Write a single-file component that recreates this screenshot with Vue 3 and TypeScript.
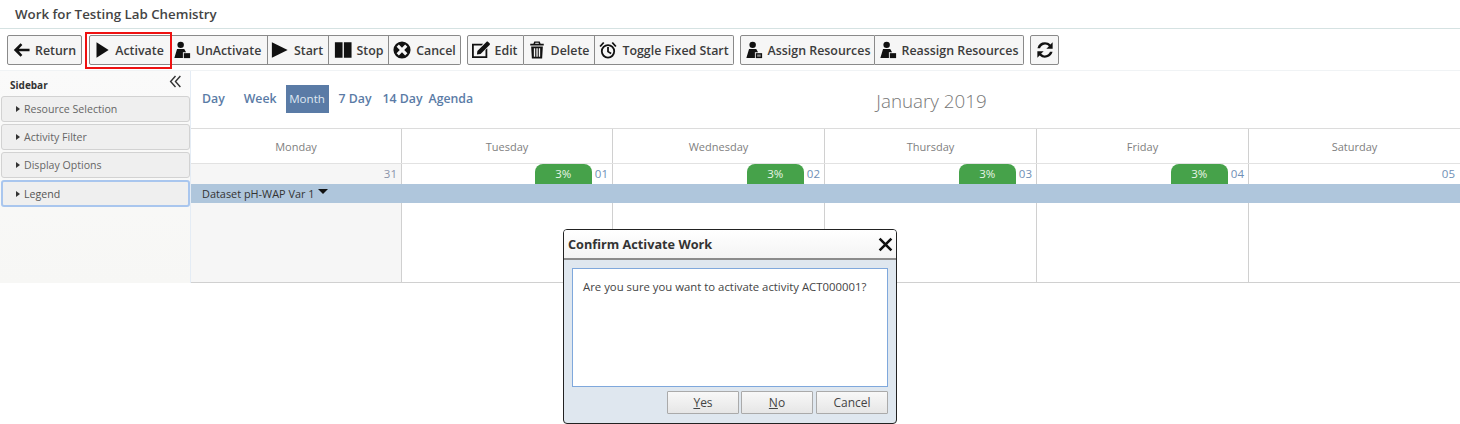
<script setup lang="ts">
interface Btn { label: string; icon: string; width: number; nudge?: number }
const groups: Btn[][] = [
  [{ label: 'Return', icon: 'back', width: 75, nudge: 1 }],
  [
    { label: 'Activate', icon: 'play', width: 82, nudge: 4 },
    { label: 'UnActivate', icon: 'person', width: 97, nudge: 4 },
    { label: 'Start', icon: 'play2', width: 61, nudge: 2 },
    { label: 'Stop', icon: 'pause', width: 60 },
    { label: 'Cancel', icon: 'cancel', width: 72 },
  ],
  [
    { label: 'Edit', icon: 'edit', width: 57, nudge: 2 },
    { label: 'Delete', icon: 'trash', width: 71, nudge: 1 },
    { label: 'Toggle Fixed Start', icon: 'alarm', width: 139 },
  ],
  [
    { label: 'Assign Resources', icon: 'assign', width: 135 },
    { label: 'Reassign Resources', icon: 'person', width: 149, nudge: 1 },
  ],
  [{ label: '', icon: 'refresh', width: 29 }],
]
const panels = ['Resource Selection', 'Activity Filter', 'Display Options', 'Legend']
const views = ['Day', 'Week', 'Month', '7 Day', '14 Day', 'Agenda']
const days = ['Monday', 'Tuesday', 'Wednesday', 'Thursday', 'Friday', 'Saturday']
const dates = ['31', '01', '02', '03', '04', '05']
function pad(b: Btn) {
  const n = b.nudge ?? 0
  return { width: b.width + 'px', paddingRight: n > 0 ? n + 'px' : '0', paddingLeft: n < 0 ? -n + 'px' : '0' }
}
</script>

<template>
  <div class="page">
    <header class="title">Work for Testing Lab Chemistry</header>
    <div class="toolbar">
      <div v-for="(g, gi) in groups" :key="gi" class="group">
        <button v-for="b in g" :key="b.label + b.icon" class="tbtn" :style="pad(b)">
          <svg class="ico" viewBox="0 0 20 20">
            <path v-if="b.icon === 'back'" d="M9.500 2.500 2 10l7.500 7.500 2-2-3.800-4h11.800v-3H7.700l3.800-4z" />
            <path v-else-if="b.icon === 'play'" d="M5 1.500 18.500 10 5 18.500z" />
            <path v-else-if="b.icon === 'play2'" d="M1 1.500 18.500 10 1 18.500z" />
            <path v-else-if="b.icon === 'pause'" d="M1 1.500h8.500v17H1zM11 1.500h8.500v17H11z" />
            <path v-else-if="b.icon === 'cancel'" fill-rule="evenodd" d="M10 .5a9.500 9.500 0 1 0 0 19 9.500 9.500 0 0 0 0-19zM6.500 4l3.500 3.500L13.500 4 16 6.500 12.500 10l3.500 3.500-2.500 2.500-3.500-3.500L6.500 16 4 13.500 7.500 10 4 6.500z" />
            <g v-else-if="b.icon === 'person' || b.icon === 'assign'">
              <circle cx="8.500" cy="4.300" r="3.600" />
              <path d="M4.500 9h8l2 3.500H11V19H1.500z" />
              <path d="M12 13.500h7V19h-7z" />
              <path v-if="b.icon === 'assign'" class="hole" d="M13.500 15h4v2.500h-4z" />
            </g>
            <g v-else-if="b.icon === 'edit'">
              <path fill-rule="evenodd" d="M0 3h12.500l-2 2H2v12h13V10l2-2v11H0z" />
              <path d="M6 11 16 1c.8-.6 1.300-.5 2 0l1.500 1.500c.6.700.6 1.200 0 2L9.500 14.500 5.500 15z" />
            </g>
            <path v-else-if="b.icon === 'trash'" fill-rule="evenodd" d="M7 .5h6l1 2.500h3.500v2h-15V3H6zM8.200 2l-.3 1h4.200l-.3-1zM3.500 6h13l-.8 13.500H4.300zM6.500 8v9.500H8V8zM9.300 8v9.500h1.500V8zM12 8v9.500h1.500V8z" />
            <g v-else-if="b.icon === 'alarm'">
              <circle cx="10" cy="11.500" r="6.900" fill="none" stroke="currentColor" stroke-width="2" />
              <path d="M9 6.800h2v4.500l3 1.800-1 1.600-4-2.500zM.5 5.500 4.500 1l1.500 1.300-4 4.500zM19.500 5.500 15.500 1 14 2.300l4 4.500z" />
            </g>
            <path v-else-if="b.icon === 'refresh'" d="M10 1.500c2.400 0 4.500 1 6 2.500L18.500 1.500V8.500h-7l2.800-2.800A6 6 0 0 0 4.500 8H1.600A8.600 8.600 0 0 1 10 1.500zM1.500 11.500h7l-2.800 2.800A6 6 0 0 0 15.500 12h2.900a8.600 8.600 0 0 1-14.400 4l-2.500 2.500z" />
          </svg>
          <span v-if="b.label" class="lbl">{{ b.label }}</span>
        </button>
      </div>
    </div>
    <div class="red-box"></div>

    <div class="main">
      <aside class="sidebar">
        <div class="side-head">
          <span>Sidebar</span>
          <svg class="chev" viewBox="0 0 12 12"><path d="M6 1 1.500 6 6 11M10.500 1 6 6l4.500 5" /></svg>
        </div>
        <div v-for="p in panels" :key="p" class="panel" :class="{ active: p === 'Legend' }">
          <i class="tri"></i>{{ p }}
        </div>
      </aside>
      <section class="cal">
        <div class="cal-top">
          <nav class="views">
            <a v-for="v in views" :key="v" class="view" :class="'v-' + v.replace(' ', '')">{{ v }}</a>
          </nav>
          <div class="month">January 2019</div>
        </div>
        <div class="grid heads">
          <div v-for="d in days" :key="d" class="head">{{ d }}</div>
        </div>
        <div class="grid dates">
          <div v-for="(d, i) in dates" :key="d" class="date" :class="{ off: i === 0 }">
            <span v-if="i > 0 && i < 5" class="pill">3%</span>
            <span class="num">{{ d }}</span>
          </div>
        </div>
        <div class="bar">Dataset pH-WAP Var 1<i class="down"></i></div>
        <div class="grid body">
          <div v-for="(d, i) in dates" :key="d" class="cell" :class="{ off: i === 0 }"></div>
        </div>
      </section>
    </div>

    <div class="modal">
      <div class="m-title">
        <span>Confirm Activate Work</span>
        <svg class="x" viewBox="0 0 14 14"><path d="M1.500 1.500l11 11M12.500 1.500l-11 11" /></svg>
      </div>
      <div class="m-body">
        <div class="m-msg">Are you sure you want to activate activity ACT000001?</div>
        <div class="m-actions">
          <button class="m-btn"><u>Y</u>es</button>
          <button class="m-btn"><u>N</u>o</button>
          <button class="m-btn">Cancel</button>
        </div>
      </div>
    </div>
  </div>
</template>

<style>
html, body { margin: 0; background: #fff; overflow: hidden; }
</style>

<style scoped>
.page {
  position: relative;
  width: 1460px;
  height: 424px;
  font-family: "Open Sans", "Noto Sans", sans-serif;
  color: #333;
  overflow: hidden;
}
.title {
  height: 29px;
  box-sizing: border-box;
  padding: 5px 0 0 15px;
  font-size: 13.300px;
  font-weight: 600;
  line-height: 19px;
  color: #444;
  border-bottom: 1px solid #d5e2e2;
}
.toolbar {
  display: flex;
  gap: 6px;
  height: 42px;
  box-sizing: border-box;
  padding: 6px 0 0 7px;
  border-bottom: 1px solid #f0f3f5;
}
.group { display: flex; }
.group:nth-child(1) { margin-right: 1px; }
.tbtn {
  display: flex;
  align-items: center;
  justify-content: center;
  gap: 5px;
  height: 30px;
  box-sizing: border-box;
  background: #f6f6f6;
  border: 1px solid #8a8a8a;
  border-left-width: 0;
  font: 600 12.400px "Open Sans", sans-serif;
  color: #3c3c3c;
  white-space: nowrap;
}
.tbtn:first-child { border-left-width: 1px; border-radius: 2px 0 0 2px; }
.tbtn:last-child { border-radius: 0 2px 2px 0; }
.tbtn:only-child { border-radius: 2px; }
.lbl { padding-top: 1px; }
.ico { width: 18px; height: 18px; fill: #111; color: #111; flex: none; }
.hole { fill: #888; }
.red-box {
  position: absolute;
  left: 85px;
  top: 32px;
  width: 83px;
  height: 33px;
  border: 2px solid #ee1111;
}
.main { display: flex; height: 212px; }
.sidebar {
  width: 191px;
  flex: none;
  box-sizing: border-box;
  background: linear-gradient(#fafafa, #f7f7f5);
  border-right: 1px solid #e4ecf5;
}
.side-head {
  display: flex;
  justify-content: space-between;
  align-items: center;
  height: 25px;
  padding: 2px 8px 0 10px;
  box-sizing: border-box;
  font-size: 10px;
  font-weight: 700;
  color: #333;
}
.chev { width: 13px; height: 13px; fill: none; stroke: #333; stroke-width: 1.300; margin-top: -6px; }
.panel {
  display: flex;
  align-items: center;
  height: 26px;
  margin: 0 0 2px 1px;
  width: 189px;
  box-sizing: border-box;
  padding-left: 14px;
  font-size: 10.600px;
  color: #666;
  background: #efefef;
  border: 1px solid #d2d2d2;
  border-radius: 3px;
}
.panel:first-of-type { margin-bottom: 3px; }
.panel.active { border: 2px solid #a9c6ee; padding-left: 13px; color: #555; height: 27px; }
.tri {
  width: 0;
  height: 0;
  margin-right: 4px;
  border-left: 4px solid #333;
  border-top: 3.500px solid transparent;
  border-bottom: 3.500px solid transparent;
}
.cal { flex: 1; min-width: 0; }
.cal-top {
  position: relative;
  height: 58px;
  box-sizing: border-box;
  border-bottom: 1px solid #dcdcdc;
}
.views { display: flex; padding: 14px 0 0 0; }
.view {
  height: 28px;
  line-height: 28px;
  font-size: 12.300px;
  font-weight: 600;
  color: #5a7ba6;
}
.v-Day { margin-left: 11px; margin-right: 19px; }
.v-Week { margin-right: 9px; }
.v-Month { width: 43px; text-align: center; background: #5a7ba6; color: #dfe8f2; font-weight: 400; font-size: 11.600px; margin-right: 10px; }
.v-7Day { margin-right: 11px; }
.v-14Day { margin-right: 6px; }
.month {
  position: absolute;
  left: 212px;
  right: 0;
  top: 16px;
  text-align: center;
  font-size: 18.800px;
  font-weight: 300;
  line-height: 28px;
  color: #777;
}
.grid { display: grid; grid-template-columns: 211px 211px repeat(4, 212px); }
.heads { height: 35px; border-bottom: 1px solid #e2e2e2; box-sizing: border-box; }
.head {
  display: flex;
  align-items: center;
  justify-content: center;
  font-size: 11px;
  color: #808080;
  border-right: 1px solid #d0d0d0;
}
.dates { height: 20px; }
.date {
  display: flex;
  justify-content: flex-end;
  align-items: flex-end;
  gap: 3px;
  padding-right: 4px;
  border-right: 1px solid #d0d0d0;
  font-size: 11.500px;
  color: #6f8fb6;
}
.date:last-child { padding-right: 5px; }
.date.off { color: #8a94aa; background: #f6f6f6; }
.num { line-height: 20px; }
.pill {
  width: 57px;
  height: 20px;
  line-height: 20px;
  text-align: center;
  background: #46a24a;
  color: #e8f5e8;
  font-size: 11.500px;
  border-radius: 8px 8px 0 0;
}
.bar {
  display: flex;
  align-items: center;
  height: 19px;
  box-sizing: border-box;
  padding-left: 11px;
  background: #afc6dc;
  font-size: 10.900px;
  color: #333;
}
.down {
  width: 0;
  height: 0;
  margin: -4px 0 0 4px;
  border-top: 5px solid #111;
  border-left: 5px solid transparent;
  border-right: 5px solid transparent;
}
.body { height: 80px; border-bottom: 1px solid #d0d0d0; box-sizing: border-box; }
.cell { border-right: 1px solid #d0d0d0; }
.cell.off { background: #f6f6f6; }
.modal {
  position: absolute;
  left: 563px;
  top: 229px;
  width: 334px;
  height: 195px;
  box-sizing: border-box;
  border: 1px solid #222;
  border-radius: 4px;
  overflow: hidden;
  background: #dfe7ef;
  display: flex;
  flex-direction: column;
}
.m-title {
  display: flex;
  justify-content: space-between;
  align-items: center;
  height: 30px;
  flex: none;
  box-sizing: border-box;
  padding: 0 3px 0 4px;
  background: linear-gradient(#fff, #f4f4f4);
  border-bottom: 2px solid #8c8c8c;
  font-size: 12.700px;
  font-weight: 700;
  color: #333;
}
.x { width: 15px; height: 15px; fill: none; stroke: #111; stroke-width: 2.400; }
.m-body { flex: 1; padding: 8px 8px 9px 8px; display: flex; flex-direction: column; }
.m-msg {
  height: 119px;
  box-sizing: border-box;
  padding: 10px 10px;
  background: #fff;
  border: 1px solid #7fa8dc;
  font-size: 11.350px;
  line-height: 16px;
  color: #444;
}
.m-actions { display: flex; justify-content: flex-end; gap: 2px; margin-top: 4px; }
.m-btn {
  width: 72px;
  height: 23px;
  padding: 0;
  background: linear-gradient(#f8f8f8, #e6e6e6);
  border: 1px solid #aaa;
  border-radius: 1px;
  font: 400 12px "Open Sans", sans-serif;
  color: #444;
}
.m-btn:last-child { margin-left: 1px; }
</style>
